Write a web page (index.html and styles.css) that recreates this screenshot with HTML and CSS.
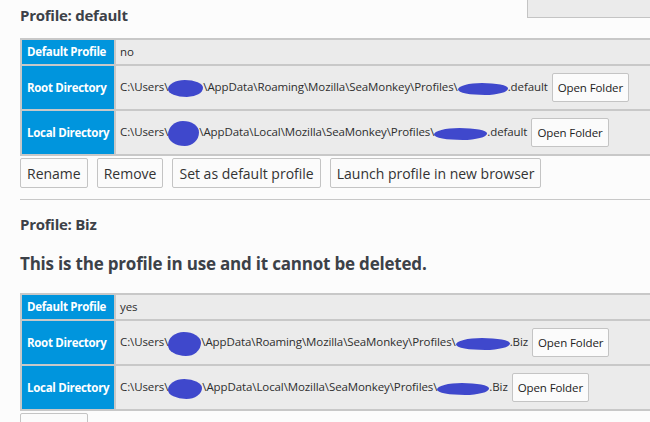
FILE: index.html
```html
<!DOCTYPE html>
<html lang="en">
<head>
<meta charset="utf-8">
<title>Profiles</title>
<link rel="stylesheet" href="styles.css">
</head>
<body>
<div class="page">
  <section class="profile profile-first">
    <div class="profile-head">
      <h2 class="profile-title">Profile: default</h2>
      <div class="corner-box"></div>
    </div>
    <table class="info">
      <tr class="row-small"><th>Default Profile</th><td>no</td></tr>
      <tr><th>Root Directory</th><td><span class="path">C:\Users\<span class="redact rd-a"></span>\AppData\Roaming\Mozilla\SeaMonkey\Profiles\<span class="redact rd-b"></span>.default</span><button class="folder-btn">Open Folder</button></td></tr>
      <tr><th>Local Directory</th><td><span class="path">C:\Users\<span class="redact rd-c"></span>\AppData\Local\Mozilla\SeaMonkey\Profiles\<span class="redact rd-d"></span>.default</span><button class="folder-btn">Open Folder</button></td></tr>
    </table>
    <div class="actions">
      <button class="action-btn">Rename</button>
      <button class="action-btn">Remove</button>
      <button class="action-btn">Set as default profile</button>
      <button class="action-btn">Launch profile in new browser</button>
    </div>
  </section>
  <hr class="divider">
  <section class="profile profile-second">
    <h2 class="profile-title">Profile: Biz</h2>
    <h1 class="notice">This is the profile in use and it cannot be deleted.</h1>
    <table class="info">
      <tr class="row-small"><th>Default Profile</th><td>yes</td></tr>
      <tr><th>Root Directory</th><td><span class="path">C:\Users\<span class="redact rd-e"></span>\AppData\Roaming\Mozilla\SeaMonkey\Profiles\<span class="redact rd-f"></span>.Biz</span><button class="folder-btn">Open Folder</button></td></tr>
      <tr><th>Local Directory</th><td><span class="path">C:\Users\<span class="redact rd-g"></span>\AppData\Local\Mozilla\SeaMonkey\Profiles\<span class="redact rd-h"></span>.Biz</span><button class="folder-btn">Open Folder</button></td></tr>
    </table>
    <div class="actions">
      <button class="action-btn">Rename</button>
    </div>
  </section>
</div>
</body>
</html>
```

FILE: styles.css
```css
html, body {
  margin: 0;
  padding: 0;
  background: #fcfcfc;
  overflow: hidden;
}

body {
  font-family: "Open Sans", "Noto Sans", sans-serif;
  color: #333;
}

.page {
  width: 700px;
  padding-left: 20px;
}

.profile-head {
  display: flex;
  justify-content: space-between;
  align-items: flex-start;
}

.profile-title {
  margin: 0;
  font-size: 15px;
  line-height: 20px;
  font-weight: bold;
  letter-spacing: -0.25px;
  color: #3c4148;
}

.profile-first .profile-title {
  padding-top: 5px;
}

.profile-second .profile-title {
  margin-top: 14px;
}

.corner-box {
  width: 193px;
  height: 18px;
  box-sizing: border-box;
  background: #ebebeb;
  border-left: 1px solid #c4c4c4;
  border-bottom: 1px solid #c4c4c4;
}

.notice {
  margin: 18px 0 0;
  font-size: 17px;
  line-height: 24px;
  font-weight: bold;
  letter-spacing: -0.2px;
  color: #3c4148;
}

.info {
  width: 100%;
  border-collapse: separate;
  border-spacing: 2px;
  background: #c8c8c8;
  margin-top: 13px;
}

.profile-second .info {
  margin-top: 17px;
}

.info th {
  width: 83px;
  padding: 4px 4px 4px 5px;
  background: #0095dd;
  color: #fff;
  font-size: 11.5px;
  line-height: 16px;
  font-weight: bold;
  letter-spacing: -0.3px;
  text-align: left;
  white-space: nowrap;
}

.info td {
  padding: 4px;
  background: #ebebeb;
  font-size: 11.5px;
  line-height: 16px;
  letter-spacing: -0.1px;
  color: #2e2e2e;
  white-space: nowrap;
}

.path {
  vertical-align: middle;
}

.redact {
  display: inline-block;
  height: 12px;
  background: #3f48cc;
  border-radius: 48% 52% 46% 54% / 55% 45% 55% 45%;
  vertical-align: middle;
  margin-top: 2px;
}

.rd-a { width: 35px; height: 17px; }
.rd-b { width: 50px; }
.rd-c { width: 31px; height: 25px; }
.rd-d { width: 53px; }
.rd-e { width: 33px; height: 24px; }
.rd-f { width: 54px; }
.rd-g { width: 34px; height: 20px; }
.rd-h { width: 52px; }

.folder-btn {
  height: 29px;
  margin: 3px 0 3px 4px;
  padding: 0 5px;
  background: #fbfbfb;
  border: 1px solid #c4c4c4;
  border-radius: 2px;
  font-family: inherit;
  font-size: 11.5px;
  letter-spacing: -0.1px;
  color: #222;
  vertical-align: middle;
}

.actions {
  display: flex;
  gap: 9px;
  margin-top: 2px;
}

.action-btn {
  height: 30px;
  padding: 0 6px;
  background: #fbfbfb;
  border: 1px solid #c4c4c4;
  border-radius: 2px;
  font-family: inherit;
  font-size: 14px;
  color: #333;
}

.divider {
  margin: 11px 0 0;
  border: 0;
  border-top: 1px solid #c8c8c8;
}
```
